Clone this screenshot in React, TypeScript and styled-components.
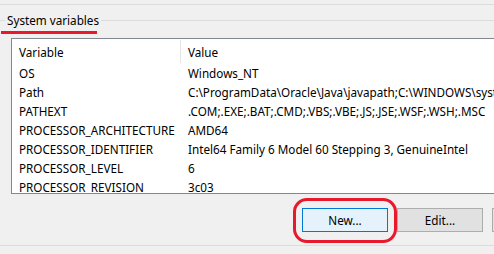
import React from "react";
import styled, { createGlobalStyle } from "styled-components";

const Global = createGlobalStyle`
  html, body { margin: 0; padding: 0; background: #f0f0f0; overflow: hidden; }
  * { box-sizing: border-box; }
`;

const FONT = `"Noto Sans", "Open Sans", sans-serif`;

const Page = styled.div`
  position: relative;
  width: 494px;
  height: 254px;
  overflow: hidden;
  background: #f0f0f0;
  font-family: ${FONT};
  font-size: 11.7px;
  color: #000;
  display: flex;
  flex-direction: column;
`;

const Rule = styled.div<{ $top: number }>`
  margin-top: ${(p) => p.$top}px;
  height: 1px;
  background: #dcdcdc;
  flex: none;
`;

const GroupHeader = styled.div`
  margin-top: 8px;
  height: 15px;
  display: flex;
  align-items: center;
  flex: none;
`;

const Stub = styled.div<{ $w?: number }>`
  height: 1px;
  background: #dcdcdc;
  width: ${(p) => (p.$w ? `${p.$w}px` : "auto")};
  flex: ${(p) => (p.$w ? "none" : "1")};
`;

const Legend = styled.span`
  padding: 0 2px;
  line-height: 15px;
  white-space: nowrap;
`;

const ListBox = styled.div`
  margin-top: 10px;
  margin-left: 11px;
  width: 520px;
  height: 156px;
  background: #fff;
  border: 1px solid #828790;
  overflow: hidden;
  flex: none;
`;

const HeaderRow = styled.div`
  display: flex;
  height: 24px;
  align-items: stretch;
`;

const HeaderCell = styled.div<{ $w?: number; $sep?: boolean }>`
  width: ${(p) => (p.$w ? `${p.$w}px` : "auto")};
  flex: ${(p) => (p.$w ? "none" : "1")};
  padding-left: 7px;
  display: flex;
  align-items: center;
  border-right: ${(p) => (p.$sep ? "1px solid #e5e5e5" : "none")};
  margin-top: 1px;
`;

const Row = styled.div`
  display: flex;
  height: 19px;
  align-items: center;
  white-space: nowrap;
`;

const Cell = styled.div<{ $w?: number }>`
  width: ${(p) => (p.$w ? `${p.$w}px` : "auto")};
  flex: ${(p) => (p.$w ? "none" : "1")};
  padding-left: 7px;
  overflow: hidden;
`;

const ButtonRow = styled.div`
  margin-top: 14px;
  margin-left: 302px;
  display: flex;
  gap: 9px;
  flex: none;
`;

const Button = styled.button<{ $primary?: boolean; $w: number }>`
  width: ${(p) => p.$w}px;
  height: 24px;
  flex: none;
  font-family: ${FONT};
  font-size: 11.7px;
  color: #000;
  padding: 0;
  background: ${(p) => (p.$primary ? "#e5f1fb" : "#e1e1e1")};
  border: 1px solid ${(p) => (p.$primary ? "#0078d7" : "#adadad")};
  border-radius: 0;
`;

const Underline = styled.div`
  position: absolute;
  left: 1px;
  top: 31px;
  width: 96px;
  height: 3px;
  background: #e8192c;
`;

const Circle = styled.div`
  position: absolute;
  left: 293px;
  top: 198px;
  width: 104px;
  height: 45px;
  border: 3px solid #e8192c;
  border-radius: 14px;
`;

const COL = 169;

const rows: [string, string][] = [
  ["OS", "Windows_NT"],
  ["Path", "C:\\ProgramData\\Oracle\\Java\\javapath;C:\\WINDOWS\\system32;C:\\WINDOWS"],
  ["PATHEXT", ".COM;.EXE;.BAT;.CMD;.VBS;.VBE;.JS;.JSE;.WSF;.WSH;.MSC"],
  ["PROCESSOR_ARCHITECTURE", "AMD64"],
  ["PROCESSOR_IDENTIFIER", "Intel64 Family 6 Model 60 Stepping 3, GenuineIntel"],
  ["PROCESSOR_LEVEL", "6"],
  ["PROCESSOR_REVISION", "3c03"],
];

export default function App() {
  return (
    <>
      <Global />
      <Page>
        <Rule $top={4} />
        <GroupHeader>
          <Stub $w={5} />
          <Legend>System variables</Legend>
          <Stub />
        </GroupHeader>
        <ListBox>
          <HeaderRow>
            <HeaderCell $w={COL} $sep>Variable</HeaderCell>
            <HeaderCell>Value</HeaderCell>
          </HeaderRow>
          {rows.map(([k, v]) => (
            <Row key={k}>
              <Cell $w={COL}>{k}</Cell>
              <Cell>{v}</Cell>
            </Row>
          ))}
        </ListBox>
        <ButtonRow>
          <Button $primary $w={86}>New...</Button>
          <Button $w={86}>Edit...</Button>
          <Button $w={86} aria-label="Delete" />
        </ButtonRow>
        <Rule $top={13} />
        <Underline />
        <Circle />
      </Page>
    </>
  );
}
